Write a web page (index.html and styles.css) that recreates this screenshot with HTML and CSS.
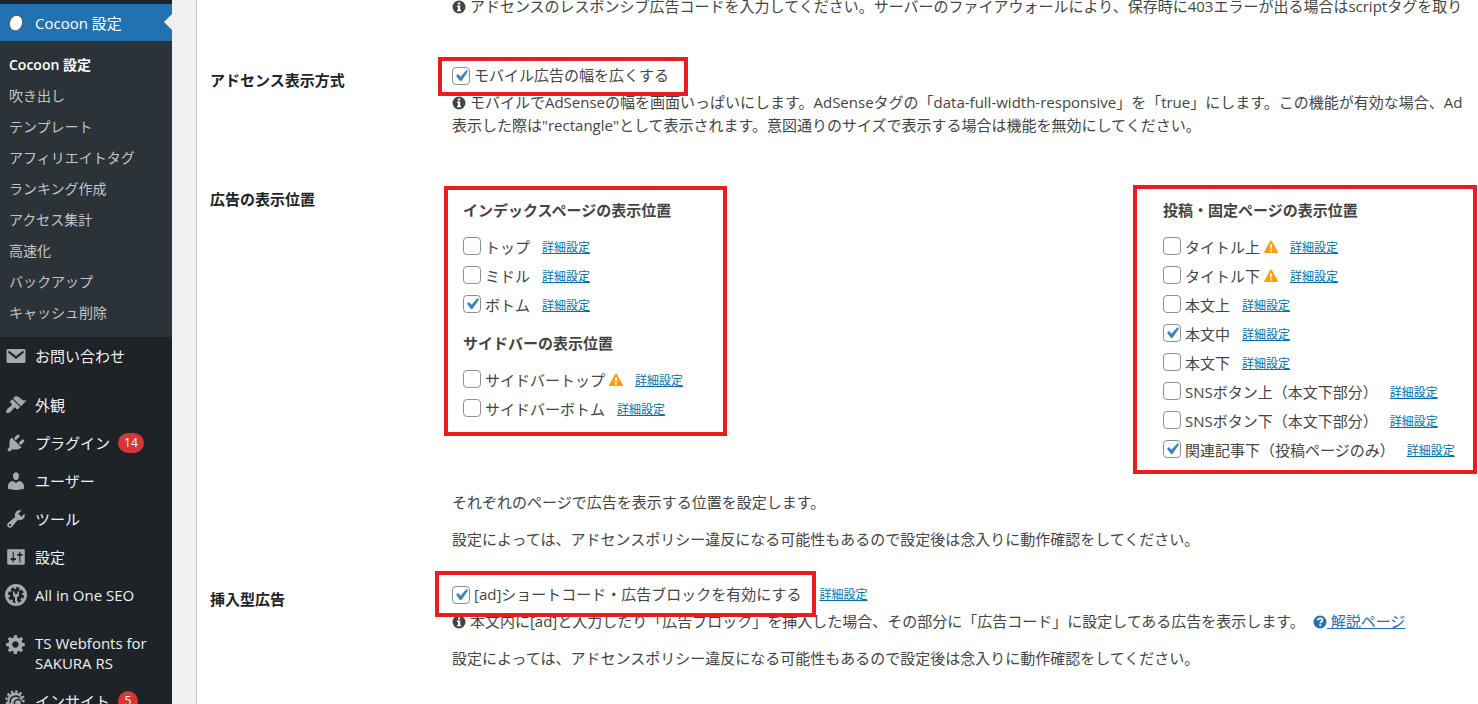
FILE: index.html
```
<!DOCTYPE html>
<html lang="ja">
<head>
  <meta charset="UTF-8">
  <meta name="viewport" content="width=device-width, initial-scale=1">
  <title>Cocoon 設定</title>
  <link rel="stylesheet" href="styles.css">
</head>
<body>

<!-- 繰り返し使うアイコン -->
<svg class="defs" width="0" height="0" aria-hidden="true">
  <symbol id="i-info" viewBox="0 0 14 14">
    <circle cx="7" cy="7" r="6.5" fill="currentColor"/>
    <path d="M6 2.6h2.2v1.8H6zM5 5.6h3.2v4.2H9v1.5H5V9.8h1V7.1H5z" fill="#fff"/>
  </symbol>
  <symbol id="i-help" viewBox="0 0 14 14">
    <circle cx="7" cy="7" r="6.5" fill="currentColor"/>
    <path d="M4.7 5.3c.2-1.3 1.1-2 2.4-2 1.300 0 2.300.7 2.300 1.900 0 1.600-2.100 1.500-2.100 3" fill="none" stroke="#fff" stroke-width="1.7"/>
    <path d="M6.300 9.300h1.900v1.800H6.300z" fill="#fff"/>
  </symbol>
  <symbol id="i-warn" viewBox="0 0 14 14">
    <path d="M7 .6c.4 0 .7.2.9.5l5.800 10.500c.4.7-.1 1.500-.9 1.500H1.200c-.8 0-1.300-.8-.9-1.500L6.100 1.100C6.300.8 6.600.6 7 .6z" fill="#ff9f10"/>
    <path d="M6 4.500h2l-.3 4.200H6.300zM6.100 9.700h1.800v1.800H6.100z" fill="#fff"/>
  </symbol>
</svg>

<div class="wrap">
  <nav class="sidebar">
    <a class="menu current" href="#">
      <svg class="icon" viewBox="0 0 22 22"><ellipse cx="11" cy="11" rx="6.500" ry="8" fill="#fff" stroke="#555d66" transform="rotate(20 11 11)"/></svg>
      <span>Cocoon 設定</span>
    </a>
    <ul class="submenu">
      <li><a class="active" href="#">Cocoon 設定</a></li>
      <li><a href="#">吹き出し</a></li>
      <li><a href="#">テンプレート</a></li>
      <li><a href="#">アフィリエイトタグ</a></li>
      <li><a href="#">ランキング作成</a></li>
      <li><a href="#">アクセス集計</a></li>
      <li><a href="#">高速化</a></li>
      <li><a href="#">バックアップ</a></li>
      <li><a href="#">キャッシュ削除</a></li>
    </ul>
    <a class="menu" href="#">
      <svg class="icon" viewBox="0 0 22 22"><rect x="1.500" y="4" width="19" height="14" rx="1.500"/><path d="M3.500 6.500L11 12.600l7.500-6.100" fill="none" stroke="#1d2327" stroke-width="2.200"/></svg>
      <span>お問い合わせ</span>
    </a>
    <div class="separator"></div>
    <a class="menu" href="#">
      <svg class="icon" viewBox="0 0 20 20"><path d="M14.480 11.060L7.410 3.990l1.500-1.500c.5-.56 2.300-.47 3.510.32 1.210.8 1.430 1.280 2.910 2.100 1.180.64 2.450 1.260 4.450.85zm-.71.71L6.700 4.700 4.930 6.470c-.39.39-.39 1.020 0 1.410l1.060 1.060c.39.39.39 1.030 0 1.420-.6.6-1.430 1.110-2.210 1.690-.35.26-.7.53-1.010.84C1.430 14.230.4 16.080 1.400 17.070c.99 1 2.840-.03 4.180-1.360.31-.31.58-.66.85-1.020.57-.78 1.080-1.610 1.690-2.210.39-.39 1.020-.39 1.410 0l1.060 1.060c.39.39 1.020.39 1.410 0z"/></svg>
      <span>外観</span>
    </a>
    <a class="menu" href="#">
      <svg class="icon" viewBox="0 0 20 20"><path d="M13.110 4.360L9.870 7.600 8 5.730l3.240-3.240c.35-.34 1.050-.2 1.560.32.52.51.66 1.210.31 1.550zm-8 1.770l.91-1.120 9.010 9.010-1.190.84c-.71.71-2.630 1.160-3.820 1.160H6.140L4.900 17.260c-.59.59-1.540.59-2.120 0-.59-.58-.59-1.530 0-2.120l1.240-1.240v-3.880c0-1.130.4-3.190 1.090-3.890zm7.260 3.970l3.240-3.240c.34-.35 1.040-.21 1.550.31.52.51.66 1.210.31 1.550l-3.240 3.250z"/></svg>
      <span>プラグイン</span><span class="count">14</span>
    </a>
    <a class="menu" href="#">
      <svg class="icon" viewBox="0 0 20 20"><path d="M10 9.250c-2.270 0-2.730-3.440-2.730-3.440C7 4.020 7.820 2 9.970 2c2.160 0 2.980 2.020 2.710 3.810 0 0-.41 3.440-2.680 3.440zm0 2.570L12.720 10c2.390 0 4.520 2.330 4.520 4.530v2.490s-3.650 1.130-7.240 1.130c-3.650 0-7.240-1.130-7.240-1.130v-2.490c0-2.250 1.940-4.480 4.470-4.480z"/></svg>
      <span>ユーザー</span>
    </a>
    <a class="menu" href="#">
      <svg class="icon" viewBox="0 0 20 20"><path d="M16.680 9.770c-1.340 1.340-3.300 1.670-4.950.99l-5.410 6.520c-.99.99-2.590.99-3.580 0s-.99-2.590 0-3.570l6.520-5.420c-.68-1.650-.35-3.610.99-4.950 1.280-1.280 3.120-1.620 4.720-1.060l-2.890 2.890 2.820 2.820 2.860-2.870c.53 1.580.18 3.390-1.080 4.650zM3.810 16.210c.4.39 1.040.39 1.430 0 .4-.4.4-1.040 0-1.430-.39-.4-1.030-.4-1.430 0-.39.39-.39 1.030 0 1.430z"/></svg>
      <span>ツール</span>
    </a>
    <a class="menu" href="#">
      <svg class="icon" viewBox="0 0 20 20"><path d="M18 16V4c0-.55-.45-1-1-1H3c-.55 0-1 .45-1 1v12c0 .55.45 1 1 1h14c.55 0 1-.45 1-1zM8 11h1c.55 0 1 .45 1 1s-.45 1-1 1H8v1.500c0 .28-.22.5-.5.5s-.5-.22-.5-.5V13H6c-.55 0-1-.45-1-1s.45-1 1-1h1V5.500c0-.28.22-.5.5-.5s.5.22.5.5V11zm5-2h-1c-.55 0-1-.45-1-1s.45-1 1-1h1V5.500c0-.28.22-.5.5-.5s.5.22.5.5V7h1c.55 0 1 .45 1 1s-.45 1-1 1h-1v5.500c0 .28-.22.5-.5.5s-.5-.22-.5-.5V9z"/></svg>
      <span>設定</span>
    </a>
    <a class="menu" href="#">
      <svg class="icon" viewBox="0 0 22 22">
        <circle cx="11" cy="11" r="11"/>
        <circle cx="11" cy="11" r="6.200" fill="#1d2327"/>
        <circle cx="11" cy="11" r="6.800" fill="none" stroke="#1d2327" stroke-width="2.400" stroke-dasharray="3.200 2.140"/>
        <path d="M8 7.500v3c0 1.500.9 2.500 2 2.900V18h2v-4.600c1.100-.4 2-1.400 2-2.900v-3h-1.600V10H9.600V7.500z"/>
      </svg>
      <span>All in One SEO</span>
    </a>
    <div class="separator"></div>
    <a class="menu long" href="#">
      <svg class="icon" viewBox="0 0 20 20"><path d="M18 12h-2.180c-.17.7-.44 1.350-.81 1.930l1.540 1.540-2.100 2.100-1.540-1.540c-.58.36-1.230.63-1.910.79V19H8v-2.180c-.68-.16-1.330-.43-1.910-.79l-1.540 1.540-2.120-2.120 1.540-1.540c-.36-.58-.63-1.230-.79-1.910H1V9.030h2.170c.16-.7.44-1.350.8-1.940L2.430 5.550l2.100-2.100 1.540 1.540c.58-.37 1.240-.64 1.930-.81V2h3v2.180c.68.16 1.330.43 1.910.79l1.540-1.540 2.120 2.120-1.540 1.540c.36.59.64 1.240.8 1.940H18V12zm-8.500 1.500c1.660 0 3-1.340 3-3s-1.340-3-3-3-3 1.340-3 3 1.340 3 3 3z"/></svg>
      <span>TS Webfonts for SAKURA RS</span>
    </a>
    <a class="menu" href="#">
      <svg class="icon" viewBox="0 0 22 22">
        <circle cx="10" cy="10" r="7.500"/>
        <circle cx="10" cy="10" r="8.500" fill="none" stroke="#a7aaad" stroke-width="2.400" stroke-dasharray="2.400 2.050"/>
        <path d="M5.500 13a5.500 5.500 0 0 1 9.500-5" fill="none" stroke="#1d2327" stroke-width="1.500"/>
        <circle cx="13" cy="13" r="3.600" stroke="#1d2327" stroke-width="1.500"/>
        <path d="M16 16l5 5" stroke="#a7aaad" stroke-width="2.500"/>
      </svg>
      <span>インサイト</span><span class="count">5</span>
    </a>
  </nav>

  <main class="content">
    <form class="settings">
      <section class="row first">
        <h2></h2>
        <div class="field">
          <p class="tips"><svg class="mark"><use href="#i-info"/></svg> アドセンスのレスポンシブ広告コードを入力してください。サーバーのファイアウォールにより、保存時に403エラーが出る場合はscriptタグを取り</p>
        </div>
      </section>

      <section class="row">
        <h2>アドセンス表示方式</h2>
        <div class="field">
          <div class="option frame frame-wide">
            <input type="checkbox" id="mobile-wide" checked>
            <label for="mobile-wide">モバイル広告の幅を広くする</label>
          </div>
          <p class="tips"><svg class="mark"><use href="#i-info"/></svg> モバイルでAdSenseの幅を画面いっぱいにします。AdSenseタグの「data-full-width-responsive」を「true」にします。この機能が有効な場合、Ad<br>表示した際は"rectangle"として表示されます。意図通りのサイズで表示する場合は機能を無効にしてください。</p>
        </div>
      </section>

      <section class="row">
        <h2>広告の表示位置</h2>
        <div class="field">
          <div class="columns">
            <div class="column frame frame-index">
              <h3>インデックスページの表示位置</h3>
              <ul>
                <li><input type="checkbox" id="index-top"><label for="index-top">トップ</label><a class="detail" href="#">詳細設定</a></li>
                <li><input type="checkbox" id="index-middle"><label for="index-middle">ミドル</label><a class="detail" href="#">詳細設定</a></li>
                <li><input type="checkbox" id="index-bottom" checked><label for="index-bottom">ボトム</label><a class="detail" href="#">詳細設定</a></li>
              </ul>
              <h3>サイドバーの表示位置</h3>
              <ul>
                <li><input type="checkbox" id="side-top"><label for="side-top">サイドバートップ</label><svg class="warn"><use href="#i-warn"/></svg><a class="detail" href="#">詳細設定</a></li>
                <li><input type="checkbox" id="side-bottom"><label for="side-bottom">サイドバーボトム</label><a class="detail" href="#">詳細設定</a></li>
              </ul>
            </div>
            <div class="column frame frame-post">
              <h3>投稿・固定ページの表示位置</h3>
              <ul>
                <li><input type="checkbox" id="title-above"><label for="title-above">タイトル上</label><svg class="warn"><use href="#i-warn"/></svg><a class="detail" href="#">詳細設定</a></li>
                <li><input type="checkbox" id="title-below"><label for="title-below">タイトル下</label><svg class="warn"><use href="#i-warn"/></svg><a class="detail" href="#">詳細設定</a></li>
                <li><input type="checkbox" id="body-above"><label for="body-above">本文上</label><a class="detail" href="#">詳細設定</a></li>
                <li><input type="checkbox" id="body-middle" checked><label for="body-middle">本文中</label><a class="detail" href="#">詳細設定</a></li>
                <li><input type="checkbox" id="body-below"><label for="body-below">本文下</label><a class="detail" href="#">詳細設定</a></li>
                <li><input type="checkbox" id="sns-above"><label for="sns-above">SNSボタン上（本文下部分）</label><a class="detail" href="#">詳細設定</a></li>
                <li><input type="checkbox" id="sns-below"><label for="sns-below">SNSボタン下（本文下部分）</label><a class="detail" href="#">詳細設定</a></li>
                <li><input type="checkbox" id="related" checked><label for="related">関連記事下（投稿ページのみ）</label><a class="detail" href="#">詳細設定</a></li>
              </ul>
            </div>
          </div>
          <p>それぞれのページで広告を表示する位置を設定します。</p>
          <p>設定によっては、アドセンスポリシー違反になる可能性もあるので設定後は念入りに動作確認をしてください。</p>
        </div>
      </section>

      <section class="row">
        <h2>挿入型広告</h2>
        <div class="field">
          <div class="line">
            <div class="option frame frame-code">
              <input type="checkbox" id="shortcode" checked>
              <label for="shortcode">[ad]ショートコード・広告ブロックを有効にする</label>
            </div>
            <a class="detail" href="#">詳細設定</a>
          </div>
          <p class="tips"><svg class="mark"><use href="#i-info"/></svg> 本文内に[ad]と入力したり「広告ブロック」を挿入した場合、その部分に「広告コード」に設定してある広告を表示します。 <a class="help" href="#"><svg class="mark"><use href="#i-help"/></svg> 解説ページ</a></p>
          <p>設定によっては、アドセンスポリシー違反になる可能性もあるので設定後は念入りに動作確認をしてください。</p>
        </div>
      </section>
    </form>
  </main>
</div>

</body>
</html>
```

FILE: styles.css
```
* {
  box-sizing: border-box;
}

body {
  margin: 0;
  background-color: #f0f0f1;
  color: #444;
  font-family: "Open Sans", "Noto Sans CJK JP", sans-serif;
  font-size: 15px;
  line-height: 23px;
}

h2, h3, p, ul {
  margin: 0;
  padding: 0;
}

ul {
  list-style: none;
}

.defs {
  position: absolute;
}

.wrap {
  display: flex;
  height: 100vh;
  overflow: hidden;
}

/* サイドバー */
.sidebar {
  flex: 0 0 172px;
  padding-top: 4px;
  background-color: #1d2327;
}

.menu {
  display: flex;
  align-items: center;
  min-height: 38px;
  padding: 0 5px;
  color: #f0f0f1;
  line-height: 20px;
  text-decoration: none;
}

.icon {
  flex: none;
  width: 22px;
  height: 22px;
  margin-right: 8px;
  fill: #a7aaad;
}

.menu.current {
  position: relative;
  min-height: 37px;
  background-color: #2271b1;
  color: #fff;
}

/* 選択中メニューの三角 */
.menu.current::after {
  content: "";
  position: absolute;
  top: 10px;
  right: 0;
  border: 8px solid transparent;
  border-right-color: #f0f0f1;
  border-left: 0;
}

.menu.long {
  align-items: flex-start;
  padding-top: 8px;
  padding-bottom: 9px;
}

.separator {
  height: 11px;
}

.submenu {
  padding: 8px 0 9px;
  background-color: #2c3338;
}

.submenu a {
  display: block;
  padding: 0 9px;
  color: #c3c4c7;
  font-size: 14px;
  line-height: 31px;
  text-decoration: none;
}

.submenu .active {
  color: #fff;
  font-weight: 600;
}

.count {
  min-width: 20px;
  margin-left: 8px;
  padding: 0 6px;
  border-radius: 10px;
  background-color: #d63638;
  color: #fff;
  font-size: 12px;
  text-align: center;
}

/* 設定エリア */
.content {
  flex: 1;
  min-width: 0;
  margin-left: 24px;
  padding-left: 13px;
  border-left: 1px solid #c3c4c7;
  background-color: #fff;
}

.row {
  display: grid;
  grid-template-columns: 242px minmax(0, 1fr);
  margin-bottom: 15px;
}

.row h2 {
  padding-top: 22px;
  color: #1d2327;
  font-size: 15px;
  font-weight: 600;
}

.field {
  padding-top: 17px;
}

.first {
  margin-top: -5px;
}

.first .field {
  padding-top: 0;
}

.field p + p {
  margin-top: 14px;
}

.tips {
  margin-top: 4px;
  margin-bottom: 14px;
  white-space: nowrap;
}

.first .tips {
  margin-top: 0;
}

.mark {
  width: 14px;
  height: 14px;
  vertical-align: -2px;
}

.help {
  margin-left: 4px;
}

.line {
  display: flex;
  align-items: center;
}

.option {
  display: flex;
  align-items: center;
  gap: 4px;
  width: fit-content;
}

.columns {
  display: grid;
  grid-template-columns: minmax(0, 1fr) 315px;
  margin-bottom: 26px;
  padding-left: 11px;
}

.column {
  justify-self: start;
  align-self: start;
  padding-top: 16px;
}

.column h3 {
  margin-bottom: 11px;
  font-size: 15px;
  font-weight: 600;
}

.column ul + h3 {
  margin-top: 12px;
}

.column li {
  display: flex;
  align-items: center;
  gap: 4px;
  height: 29px;
  white-space: nowrap;
}

input[type="checkbox"] {
  appearance: none;
  flex: none;
  width: 18px;
  height: 18px;
  margin: 0;
  border: 1px solid #8c8f94;
  border-radius: 4px;
  background: #fff center / 22px 22px no-repeat;
}

input[type="checkbox"]:checked {
  background-image: url("data:image/svg+xml;utf8,<svg xmlns='http://www.w3.org/2000/svg' viewBox='0 0 20 20'><path d='M14.83 4.89l1.34.94-5.81 8.38H9.02L5.78 9.67l1.34-1.25 2.57 2.4z' fill='%233582c4' stroke='%233582c4' stroke-width='.4'/></svg>");
}

.column input[type="checkbox"] {
  margin-bottom: 4px;
}

a {
  color: #2271b1;
}

.detail {
  margin-left: 8px;
  color: #0073aa;
  font-size: 12px;
}

.warn {
  width: 14px;
  height: 14px;
  margin-bottom: 2px;
}

.line .detail {
  margin-left: 18px;
}

/* 注目箇所の赤枠 */
.frame {
  position: relative;
}

.frame::after {
  content: "";
  position: absolute;
  inset: -7px -19px -9px -14px;
  border: 4px solid #ec1c1c;
  pointer-events: none;
}

.frame-index::after {
  inset: 3px -44px -12px -19px;
}

.frame-post::after {
  inset: 2px -22px -9px -30px;
}

.frame-code::after {
  inset: -12px -15px -11px -17px;
}
```
